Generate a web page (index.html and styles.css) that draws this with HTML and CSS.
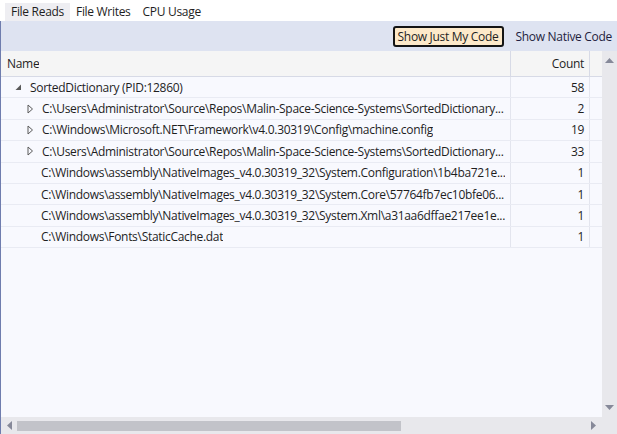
FILE: index.html
```html
<!DOCTYPE html>
<html>
<head>
<meta charset="utf-8">
<link rel="stylesheet" href="styles.css">
</head>
<body>
<div class="app">
  <div class="tabs">
    <div class="tab active">File Reads</div>
    <div class="tab">File Writes</div>
    <div class="tab">CPU Usage</div>
  </div>
  <div class="panel">
    <div class="toolbar">
      <div class="btn focused">Show Just My Code</div>
      <div class="btn">Show Native Code</div>
    </div>
    <div class="gridwrap">
      <div class="gridmain">
        <div class="grid">
          <div class="row header">
            <div class="c-name"><span class="txt">Name</span></div>
            <div class="c-count">Count</div>
            <div class="c-fill"></div>
          </div>
          <div class="row">
            <div class="c-name lvl0"><svg class="tri" width="7" height="7" viewBox="0 0 7 7"><path d="M6 0.5 L6 6 L0.5 6 Z" fill="#5a5a5a"/></svg><span class="txt">SortedDictionary (PID:12860)</span></div>
            <div class="c-count">58</div>
            <div class="c-fill"></div>
          </div>
          <div class="row">
            <div class="c-name lvl1"><svg class="tri" width="7" height="10" viewBox="0 0 7 10"><path d="M1 1 L5.5 5 L1 9 Z" fill="none" stroke="#5a5a5a" stroke-width="1"/></svg><span class="txt">C:\Users\Administrator\Source\Repos\Malin-Space-Science-Systems\SortedDictionary...</span></div>
            <div class="c-count">2</div>
            <div class="c-fill"></div>
          </div>
          <div class="row">
            <div class="c-name lvl1"><svg class="tri" width="7" height="10" viewBox="0 0 7 10"><path d="M1 1 L5.5 5 L1 9 Z" fill="none" stroke="#5a5a5a" stroke-width="1"/></svg><span class="txt">C:\Windows\Microsoft.NET\Framework\v4.0.30319\Config\machine.config</span></div>
            <div class="c-count">19</div>
            <div class="c-fill"></div>
          </div>
          <div class="row">
            <div class="c-name lvl1"><svg class="tri" width="7" height="10" viewBox="0 0 7 10"><path d="M1 1 L5.5 5 L1 9 Z" fill="none" stroke="#5a5a5a" stroke-width="1"/></svg><span class="txt">C:\Users\Administrator\Source\Repos\Malin-Space-Science-Systems\SortedDictionary...</span></div>
            <div class="c-count">33</div>
            <div class="c-fill"></div>
          </div>
          <div class="row">
            <div class="c-name lvl1 leaf"><span class="txt">C:\Windows\assembly\NativeImages_v4.0.30319_32\System.Configuration\1b4ba721e...</span></div>
            <div class="c-count">1</div>
            <div class="c-fill"></div>
          </div>
          <div class="row">
            <div class="c-name lvl1 leaf"><span class="txt">C:\Windows\assembly\NativeImages_v4.0.30319_32\System.Core\57764fb7ec10bfe06...</span></div>
            <div class="c-count">1</div>
            <div class="c-fill"></div>
          </div>
          <div class="row">
            <div class="c-name lvl1 leaf"><span class="txt">C:\Windows\assembly\NativeImages_v4.0.30319_32\System.Xml\a31aa6dffae217ee1e...</span></div>
            <div class="c-count">1</div>
            <div class="c-fill"></div>
          </div>
          <div class="row">
            <div class="c-name lvl1 leaf"><span class="txt">C:\Windows\Fonts\StaticCache.dat</span></div>
            <div class="c-count">1</div>
            <div class="c-fill"></div>
          </div>
        </div>
        <div class="hscroll">
          <svg class="arrow" width="5" height="9" viewBox="0 0 5 9"><path d="M5 0 L0 4.5 L5 9 Z" fill="#868999"/></svg>
          <div class="htrack"><div class="hthumb"></div></div>
          <svg class="arrow" width="5" height="9" viewBox="0 0 5 9"><path d="M0 0 L5 4.5 L0 9 Z" fill="#868999"/></svg>
        </div>
      </div>
      <div class="vscroll">
        <svg width="9" height="5" viewBox="0 0 9 5"><path d="M0 5 L4.5 0 L9 5 Z" fill="#868999"/></svg>
        <svg width="9" height="5" viewBox="0 0 9 5"><path d="M0 0 L4.5 5 L9 0 Z" fill="#868999"/></svg>
      </div>
    </div>
  </div>
</div>
</body>
</html>
```

FILE: styles.css
```css
html, body {
  margin: 0;
  padding: 0;
  background: #ffffff;
}
body {
  font-family: "Segoe UI", "Open Sans", "Noto Sans", sans-serif;
  font-size: 12px;
  letter-spacing: -0.3px;
  color: #1e1e1e;
}
.app {
  width: 617px;
  height: 434px;
  display: flex;
  flex-direction: column;
  overflow: hidden;
}
.tabs {
  height: 21px;
  display: flex;
  align-items: flex-end;
  padding-left: 5px;
  box-sizing: border-box;
}
.tab {
  height: 18px;
  line-height: 18px;
  padding: 0 6px;
  color: #1e1e1e;
}
.tab.active {
  background: #eeeef2;
}
.panel {
  flex: 1;
  display: flex;
  flex-direction: column;
  border-left: 1px solid #6f7dae;
  min-height: 0;
}
.toolbar {
  height: 30px;
  background: #dee3f1;
  display: flex;
  justify-content: flex-end;
  align-items: center;
  gap: 7px;
  padding-right: 0;
}
.btn {
  height: 21px;
  line-height: 17px;
  padding: 0 3px;
  color: #1e1e3e;
  box-sizing: border-box;
  border: 2px solid transparent;
}
.btn.focused {
  background: #fde9c9;
  border-color: #141414;
  border-radius: 3px;
  color: #1e1e1e;
}
.gridwrap {
  flex: 1;
  display: flex;
  min-height: 0;
}
.gridmain {
  flex: 1;
  display: flex;
  flex-direction: column;
}
.grid {
  flex: 1;
  background: #f8f9fe;
}
.row {
  display: flex;
  height: 21.4px;
  box-sizing: border-box;
  border-bottom: 1px solid #e9ebf3;
  align-items: stretch;
}
.row > div {
  display: flex;
  align-items: center;
  white-space: nowrap;
  overflow: hidden;
}
.row.header {
  height: 26px;
  background: #f5f5f5;
  border-bottom: 1px solid #d7dae6;
}
.c-name {
  width: 510px;
  flex-shrink: 0;
  box-sizing: border-box;
  padding-left: 6px;
  border-right: 1px solid #e3e5ee;
}
.header .c-name {
  border-right-color: #d7dae6;
}
.txt {
  min-width: 0;
  overflow: hidden;
  text-overflow: ellipsis;
  white-space: nowrap;
}
.tri {
  flex-shrink: 0;
}
.c-count {
  width: 79px;
  flex-shrink: 0;
  box-sizing: border-box;
  justify-content: flex-end;
  padding-right: 5px;
  border-right: 1px solid #e3e5ee;
}
.header .c-count {
  border-right-color: #d7dae6;
}
.c-fill {
  flex: 1;
}
.lvl0 {
  padding-left: 14px;
}
.lvl0 .tri {
  margin-right: 8px;
}
.lvl1 {
  padding-left: 26px;
}
.lvl1 .tri {
  margin-right: 8px;
}
.lvl1.leaf {
  padding-left: 40px;
}
.hscroll {
  height: 17px;
  background: #e8e8ec;
  display: flex;
  align-items: center;
  padding: 0 6px;
  gap: 5px;
}
.htrack {
  flex: 1;
  height: 10px;
}
.hthumb {
  width: 384px;
  height: 10px;
  background: #c2c3c9;
}
.vscroll {
  width: 15px;
  background: #e8e8ec;
  display: flex;
  flex-direction: column;
  justify-content: space-between;
  align-items: center;
  padding: 7px 0 24px;
  box-sizing: border-box;
}
```
